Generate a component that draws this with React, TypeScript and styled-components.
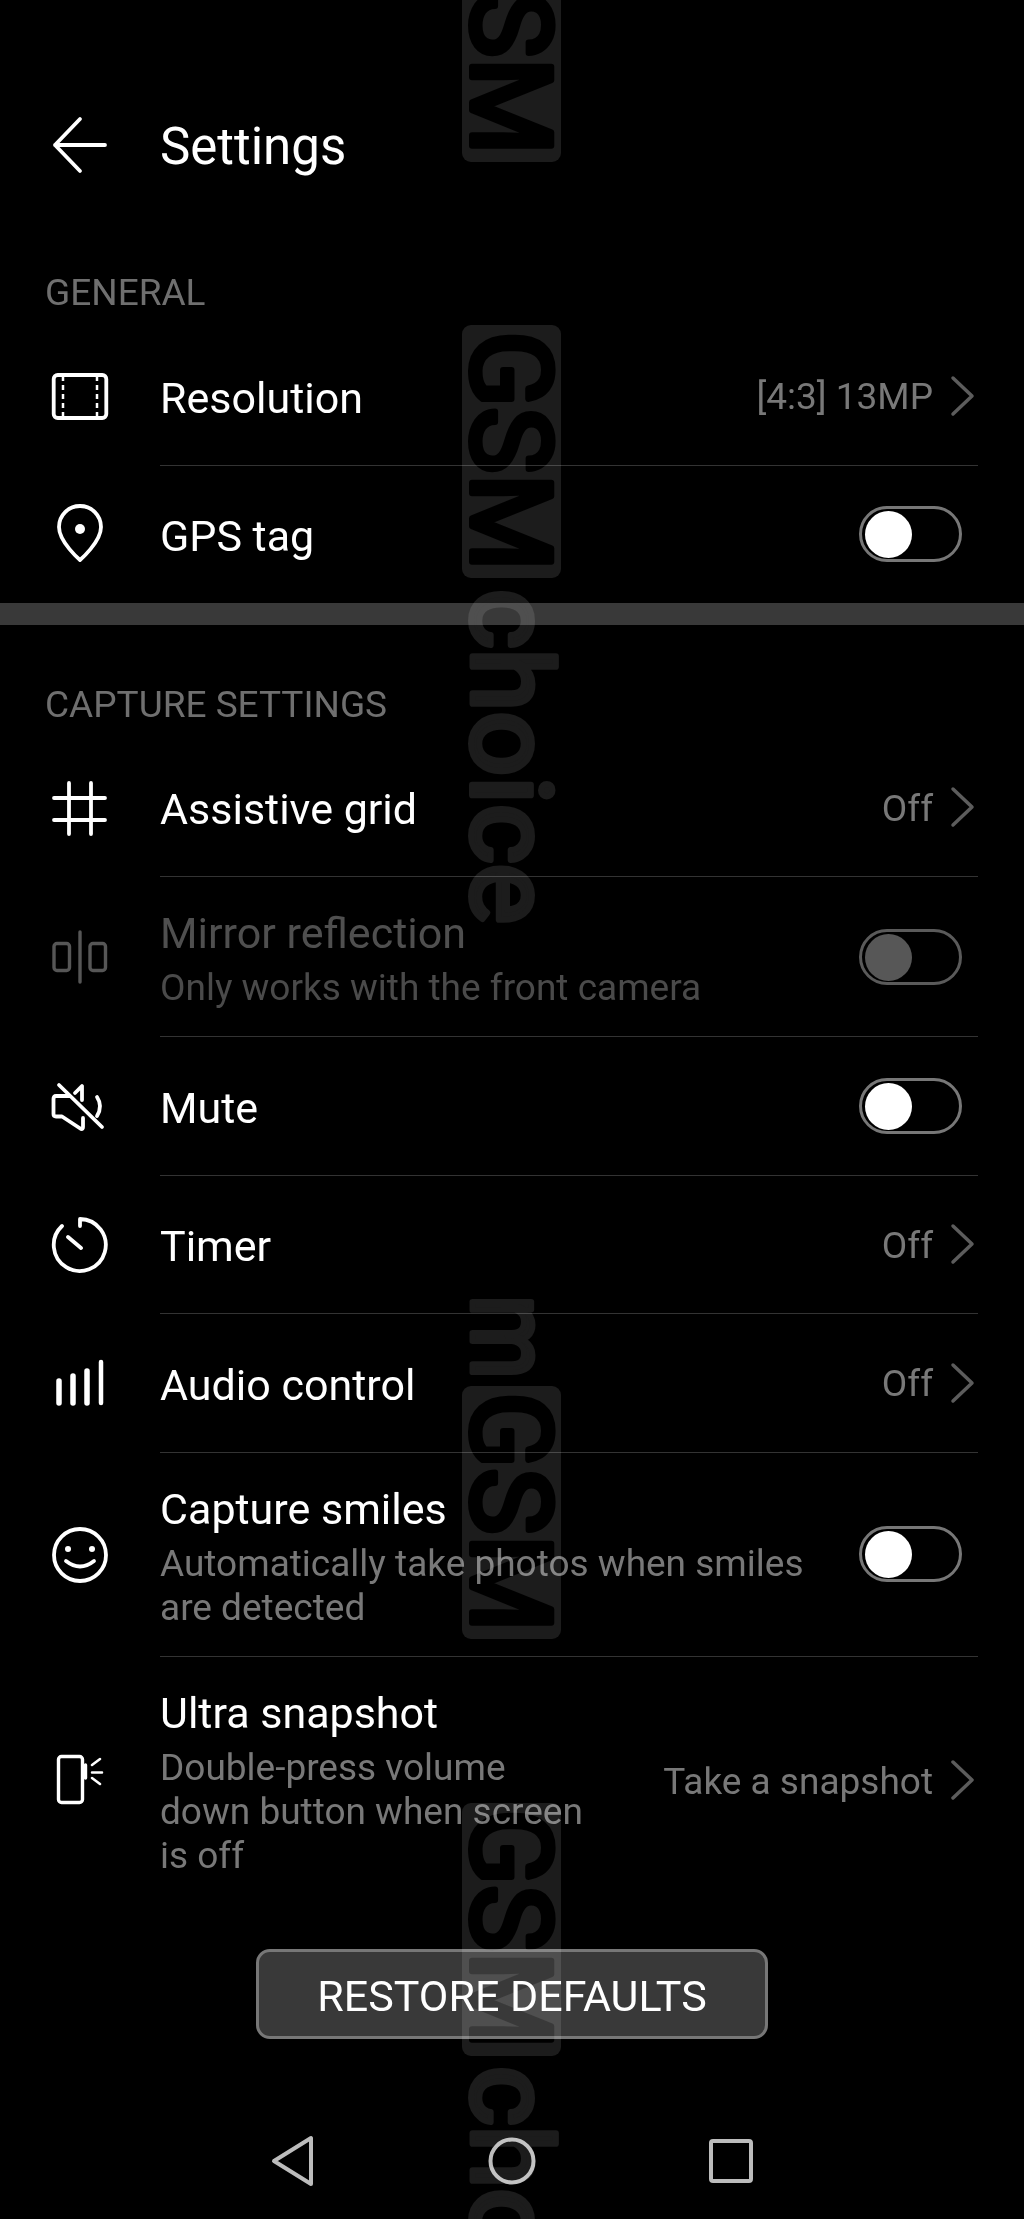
import React from "react";
import styled, { createGlobalStyle } from "styled-components";

const Global = createGlobalStyle`
  html, body { margin: 0; padding: 0; background: #000; }
  * { box-sizing: border-box; }
`;

const Page = styled.div`
  position: relative;
  width: 1024px;
  height: 2219px;
  overflow: hidden;
  background: #000;
  font-family: Roboto, "Liberation Sans", sans-serif;
  color: #fff;
`;

const TopBar = styled.header`
  display: flex;
  align-items: center;
  height: 136px;
  margin-top: 77px;
`;

const IconCell = styled.div`
  flex: 0 0 160px;
  display: flex;
  justify-content: center;
  align-items: center;
`;

const PageTitle = styled.h1`
  margin: 0;
  padding-top: 3px;
  font-size: 51px;
  font-weight: 400;
  line-height: 60px;
`;

const SectionHeader = styled.div`
  height: 114px;
  padding: 58px 0 0 45px;
  font-size: 37px;
  line-height: 44px;
  color: #6f6f6f;
`;

const Row = styled.div`
  display: flex;
  align-items: center;
`;

const RowBody = styled.div<{ $last?: boolean }>`
  flex: 1;
  display: flex;
  align-items: center;
  min-height: ${(p) => (p.$last ? "137px" : "138.5px")};
  margin-right: 46px;
  padding: 26px 0;
  border-bottom: ${(p) => (p.$last ? "0" : "1px solid #333")};
`;

const RowText = styled.div`
  flex: 1;
  min-width: 0;
  margin-top: 4px;
  display: flex;
  flex-direction: column;
  gap: 7px;
`;

const RowTitle = styled.div<{ $dim?: boolean }>`
  font-size: 43px;
  line-height: 52px;
  color: ${(p) => (p.$dim ? "#4f4f4f" : "#fff")};
`;

const RowSub = styled.div<{ $dim?: boolean; $narrow?: boolean }>`
  font-size: 37px;
  line-height: 44px;
  color: ${(p) => (p.$dim ? "#4a4a4a" : "#787878")};
  max-width: ${(p) => (p.$narrow ? "450px" : "none")};
  padding-right: 16px;
`;

const ValueWrap = styled.div`
  display: flex;
  align-items: center;
  gap: 17px;
  margin-right: 3px;
  flex: none;
`;

const Value = styled.span`
  padding-top: 3px;
  font-size: 37px;
  line-height: 44px;
  color: #787878;
`;

const Switch = styled.div<{ $dim?: boolean }>`
  flex: none;
  width: 103px;
  height: 56px;
  margin-right: 16px;
  padding: 2px 0 0 3px;
  border: 3px solid ${(p) => (p.$dim ? "#5a5a5a" : "#777")};
  border-radius: 28px;
`;

const Knob = styled.div<{ $dim?: boolean }>`
  width: 47px;
  height: 47px;
  border-radius: 50%;
  background: ${(p) => (p.$dim ? "#575757" : "#fff")};
`;

const Band = styled.div`
  height: 22px;
  background: #393939;
`;

const ButtonRow = styled.div`
  display: flex;
  justify-content: center;
  margin-top: 45px;
`;

const RestoreButton = styled.button`
  width: 512px;
  height: 90px;
  padding: 4px 0 0;
  background: #393939;
  border: 3px solid #777;
  border-radius: 14px;
  color: #fff;
  font-family: Roboto, "Liberation Sans", sans-serif;
  font-size: 43px;
  line-height: 50px;
`;

const NavBar = styled.nav`
  display: flex;
  justify-content: center;
  gap: 159px;
  margin-top: 92px;
`;

const Glyph = styled.svg<{ $ink?: string; $weight?: number }>`
  display: block;
  width: 60px;
  height: 60px;
  fill: none;
  stroke: ${(p) => p.$ink ?? "#fff"};
  stroke-width: ${(p) => p.$weight ?? 3.8};
  stroke-linecap: round;
  stroke-linejoin: round;
`;

const Chevron = styled.svg`
  display: block;
  width: 25px;
  height: 42px;
  fill: none;
  stroke: #5c5c5c;
  stroke-width: 3.5;
  stroke-linecap: round;
  stroke-linejoin: round;
`;

const WatermarkSvg = styled.svg<{ $top: number }>`
  position: absolute;
  left: 440px;
  top: ${(p) => p.$top}px;
  width: 130px;
  mix-blend-mode: screen;
  pointer-events: none;
  overflow: visible;
`;

const WatermarkText = styled.text<{ $ink: string }>`
  font-family: Roboto, "Liberation Sans", sans-serif;
  font-weight: 400;
  font-size: 111px;
  fill: ${(p) => p.$ink};
  stroke: ${(p) => p.$ink};
  stroke-width: 6px;
  stroke-linejoin: round;
`;

const G = (p: React.PropsWithChildren<{ ink?: string; weight?: number }>) => (
  <Glyph viewBox="0 0 60 60" $ink={p.ink} $weight={p.weight}>
    {p.children}
  </Glyph>
);

const BackIcon = () => (
  <G>
    <path d="M30 4 5 30l25 26M5 30h50" />
  </G>
);
const FilmIcon = () => (
  <G>
    <rect x="3.7" y="9" width="52.6" height="43" rx="4" />
    <path d="M13 10v41M47 10v41" strokeWidth="2.5" strokeDasharray="5 4" strokeLinecap="butt" />
  </G>
);
const PinIcon = () => (
  <G>
    <path d="M30 56C30 56 9 38 9 23a21 21 0 0 1 42 0C51 38 30 56 30 56Z" />
    <circle cx="30" cy="25" r="5" fill="#fff" stroke="none" />
  </G>
);
const GridIcon = () => (
  <G>
    <path d="M19 5v51M41 5v51M4 20h51M4 42h51" />
  </G>
);
const MirrorIcon = () => (
  <G ink="#565656" weight={3.4}>
    <path d="M30 5v50" />
    <rect x="4" y="16.500" width="15.500" height="27" rx="3" />
    <rect x="40" y="16.500" width="15.500" height="27" rx="3" />
  </G>
);
const MuteIcon = () => (
  <G>
    <path d="M9 9l43 42M47 21q6 9 0 19M25 17l7-7v14M19 20H6q-2.500 0-2.500 3v15q0 2.500 2.500 2.500h6L31 53q2 .5 2-2V42" />
  </G>
);
const TimerIcon = () => (
  <G>
    <path d="M30 4a26 26 0 1 1-18 7M30 4v7M18 22l13 11" />
  </G>
);
const AudioIcon = () => (
  <G weight={5.5}>
    <path d="M9 28v22M23 23v27M37 18v32" />
    <path d="M51 9v41" strokeWidth="4.500" />
  </G>
);
const SmileIcon = () => (
  <G>
    <circle cx="30" cy="30" r="26" />
    <circle cx="18" cy="24" r="3" fill="#fff" stroke="none" />
    <circle cx="42" cy="24" r="3" fill="#fff" stroke="none" />
    <path d="M16 36q14 11 28 0" />
  </G>
);
const SnapIcon = () => (
  <G weight={3.4}>
    <rect x="8.500" y="6.500" width="24" height="46" rx="3" />
    <path d="M35.500 15v13" />
    <path d="M42 15l8-6M42 22.500h10M42 28l8 6" strokeWidth="2.500" />
  </G>
);

const ChevronIcon = () => (
  <Chevron viewBox="0 0 25 42">
    <path d="M3 3l19 18L3 39" />
  </Chevron>
);

const Toggle = ({ dim }: { dim?: boolean }) => (
  <Switch $dim={dim}>
    <Knob $dim={dim} />
  </Switch>
);

const More = ({ value }: { value: string }) => (
  <ValueWrap>
    <Value>{value}</Value>
    <ChevronIcon />
  </ValueWrap>
);

type ItemProps = {
  icon: React.ReactNode;
  title: string;
  sub?: string;
  value?: string;
  toggle?: boolean;
  dim?: boolean;
  last?: boolean;
  narrow?: boolean;
};

const Item = ({ icon, title, sub, value, toggle, dim, last, narrow }: ItemProps) => (
  <Row>
    <IconCell>{icon}</IconCell>
    <RowBody $last={last}>
      <RowText>
        <RowTitle $dim={dim}>{title}</RowTitle>
        {sub && (
          <RowSub $dim={dim} $narrow={narrow}>
            {sub}
          </RowSub>
        )}
      </RowText>
      {value && <More value={value} />}
      {toggle && <Toggle dim={dim} />}
    </RowBody>
  </Row>
);

const Boxed = ({ top }: { top: number }) => (
  <WatermarkSvg $top={top} height="254" viewBox="0 0 130 254">
    <rect x="22" y="0" width="99" height="253" rx="9" fill="#1c1c1c" />
    <g transform="translate(32 0) rotate(90)">
      <WatermarkText $ink="#000" x="6" y="0" textLength="240" lengthAdjust="spacingAndGlyphs">
        GSM
      </WatermarkText>
    </g>
  </WatermarkSvg>
);

const Word = ({ top, text, length, height }: { top: number; text: string; length: number; height: number }) => (
  <WatermarkSvg $top={top} height={height} viewBox={`0 0 130 ${height}`}>
    <g transform="translate(32 0) rotate(90)">
      <WatermarkText $ink="#1c1c1c" x="3" y="0" textLength={length} lengthAdjust="spacingAndGlyphs">
        {text}
      </WatermarkText>
    </g>
  </WatermarkSvg>
);

export default function App() {
  return (
    <Page>
      <Global />
      <TopBar>
        <IconCell>
          <BackIcon />
        </IconCell>
        <PageTitle>Settings</PageTitle>
      </TopBar>

      <SectionHeader>GENERAL</SectionHeader>
      <Item icon={<FilmIcon />} title="Resolution" value="[4:3] 13MP" />
      <Item icon={<PinIcon />} title="GPS tag" toggle last />

      <Band />

      <SectionHeader>CAPTURE SETTINGS</SectionHeader>
      <Item icon={<GridIcon />} title="Assistive grid" value="Off" />
      <Item icon={<MirrorIcon />} title="Mirror reflection" sub="Only works with the front camera" toggle dim />
      <Item icon={<MuteIcon />} title="Mute" toggle />
      <Item icon={<TimerIcon />} title="Timer" value="Off" />
      <Item icon={<AudioIcon />} title="Audio control" value="Off" />
      <Item
        icon={<SmileIcon />}
        title="Capture smiles"
        sub="Automatically take photos when smiles are detected"
        toggle
      />
      <Item
        icon={<SnapIcon />}
        title="Ultra snapshot"
        sub="Double-press volume down button when screen is off"
        value="Take a snapshot"
        last
        narrow
      />

      <ButtonRow>
        <RestoreButton>RESTORE DEFAULTS</RestoreButton>
      </ButtonRow>

      <NavBar>
        <G ink="#bcbcbc" weight={4}>
          <path d="M11 30 48 7v46Z" />
        </G>
        <G ink="#bcbcbc" weight={4}>
          <circle cx="30" cy="30" r="21.500" />
        </G>
        <G ink="#bcbcbc" weight={4}>
          <rect x="10" y="10" width="40" height="40" rx="2" />
        </G>
      </NavBar>

      <Boxed top={-91} />
      <Boxed top={325} />
      <Word top={586} text="choice" length={335} height={345} />
      <Word top={1292} text="m" length={84} height={95} />
      <Boxed top={1386} />
      <Boxed top={1803} />
      <Word top={2063} text="choice" length={335} height={345} />
    </Page>
  );
}
